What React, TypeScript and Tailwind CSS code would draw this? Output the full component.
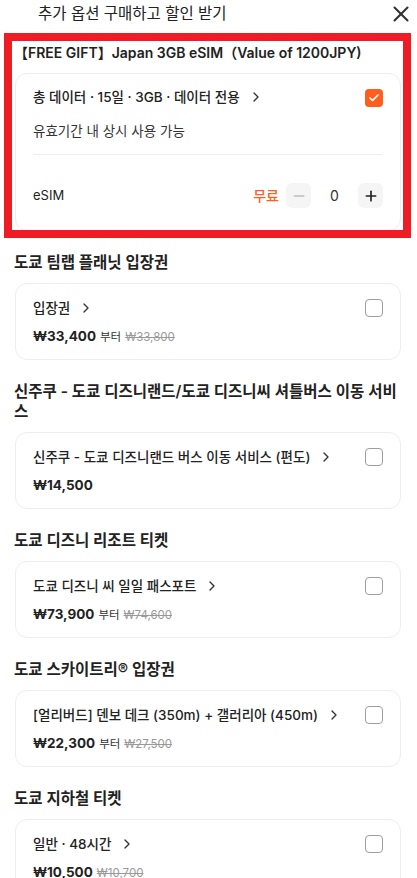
import { X, ChevronRight, Check, Minus, Plus } from "lucide-react";

const font = { fontFamily: '"Inter", "Noto Sans CJK KR", sans-serif' };

interface Option {
  section: string;
  name: string;
  price: string;
  from?: boolean;
  original?: string;
}

const options: Option[] = [
  { section: "도쿄 팀랩 플래닛 입장권", name: "입장권", price: "₩33,400", from: true, original: "₩33,800" },
  {
    section: "신주쿠 - 도쿄 디즈니랜드/도쿄 디즈니씨 셔틀버스 이동 서비스",
    name: "신주쿠 - 도쿄 디즈니랜드 버스 이동 서비스 (편도)",
    price: "₩14,500",
  },
  { section: "도쿄 디즈니 리조트 티켓", name: "도쿄 디즈니 씨 일일 패스포트", price: "₩73,900", from: true, original: "₩74,600" },
  {
    section: "도쿄 스카이트리® 입장권",
    name: "[얼리버드] 덴보 데크 (350m) + 갤러리아 (450m)",
    price: "₩22,300",
    from: true,
    original: "₩27,500",
  },
  { section: "도쿄 지하철 티켓", name: "일반 · 48시간", price: "₩10,500", original: "₩10,700" },
];

function OptionCard({ o }: { o: Option }) {
  return (
    <div>
      <h3 className="pt-[22px] mb-[10px] -ml-[1px] text-[15.5px] leading-[20px] font-semibold text-[#222]">
        {o.section}
      </h3>
      <div className="border border-[#eeeeee] rounded-[12px] pl-[17px] pr-[17px] pt-[14px] pb-[13px] bg-white">
        <div className="flex items-start justify-between gap-3">
          <div className="flex items-center gap-2 h-[20px] text-[13.5px] leading-[20px] font-medium text-[#222]">
            <span>{o.name}</span>
            <ChevronRight className="w-4 h-4 text-[#333] shrink-0" strokeWidth={2} />
          </div>
          <div className="w-[18px] h-[18px] mt-[1px] shrink-0 rounded-[4px] border border-[#9e9e9e] bg-white" />
        </div>
        <div className="mt-2 h-[20px] flex items-baseline gap-1 leading-[20px]">
          <span className="text-[13.5px] font-bold text-[#222]">{o.price}</span>
          {o.from && <span className="text-[11.5px] text-[#333]">부터</span>}
          {o.original && <span className="text-[11.5px] text-[#999] line-through">{o.original}</span>}
        </div>
      </div>
    </div>
  );
}

export default function App() {
  return (
    <div className="relative w-[417px] h-[878px] overflow-hidden bg-white" style={font}>
      <div className="flex items-center justify-between pl-[38px] pr-[3px] h-[27px]">
        <h2 className="text-[15.5px] text-[#222] font-normal">추가 옵션 구매하고 할인 받기</h2>
        <X className="w-[26px] h-[26px] text-[#333]" strokeWidth={1.9} />
      </div>

      <div className="px-[15px] pr-[16px]">
        <h3 className="pt-[16px] text-[14px] leading-[20px] font-semibold text-[#222] -ml-[1px]">
          【FREE GIFT】Japan 3GB eSIM（Value of 1200JPY)
        </h3>
        <div className="mt-[10px] border border-[#eeeeee] rounded-[12px] px-[17px] pt-[13px] pb-[22px]">
          <div className="flex items-start justify-between">
            <div className="flex items-center gap-2 h-[20px] text-[13.5px] leading-[20px] font-medium text-[#222]">
              <span>총 데이터 · 15일 · 3GB · 데이터 전용</span>
              <ChevronRight className="w-4 h-4 text-[#333]" strokeWidth={2} />
            </div>
            <div className="w-[18px] h-[18px] mt-[2px] rounded-[4px] bg-[#ff5e1f] flex items-center justify-center">
              <Check className="w-3 h-3 text-white" strokeWidth={3.5} />
            </div>
          </div>
          <p className="mt-[14px] h-[20px] text-[13.5px] leading-[20px] text-[#333]">유효기간 내 상시 사용 가능</p>
          <div className="mt-[13px] border-t border-[#eeeeee]" />
          <div className="mt-[28px] flex items-center justify-between">
            <span className="text-[13px] text-[#222]">eSIM</span>
            <div className="flex items-center">
              <span className="text-[14px] font-medium text-[#ff5e1f] mr-[7px]">무료</span>
              <div className="w-[25px] h-[25px] rounded-[6px] bg-[#f5f5f5] flex items-center justify-center">
                <Minus className="w-4 h-4 text-[#bdbdbd]" strokeWidth={2.5} />
              </div>
              <span className="w-[47px] text-center text-[14px] text-[#333]">0</span>
              <div className="w-[25px] h-[25px] rounded-[6px] bg-[#f5f5f5] flex items-center justify-center">
                <Plus className="w-4 h-4 text-[#222]" strokeWidth={2.5} />
              </div>
            </div>
          </div>
        </div>

        {options.map((o) => (
          <OptionCard key={o.section} o={o} />
        ))}
      </div>

      <div className="absolute left-[4px] top-[33px] w-[407px] h-[205px] border-[8px] border-[#ee1c25] pointer-events-none" />
    </div>
  );
}
